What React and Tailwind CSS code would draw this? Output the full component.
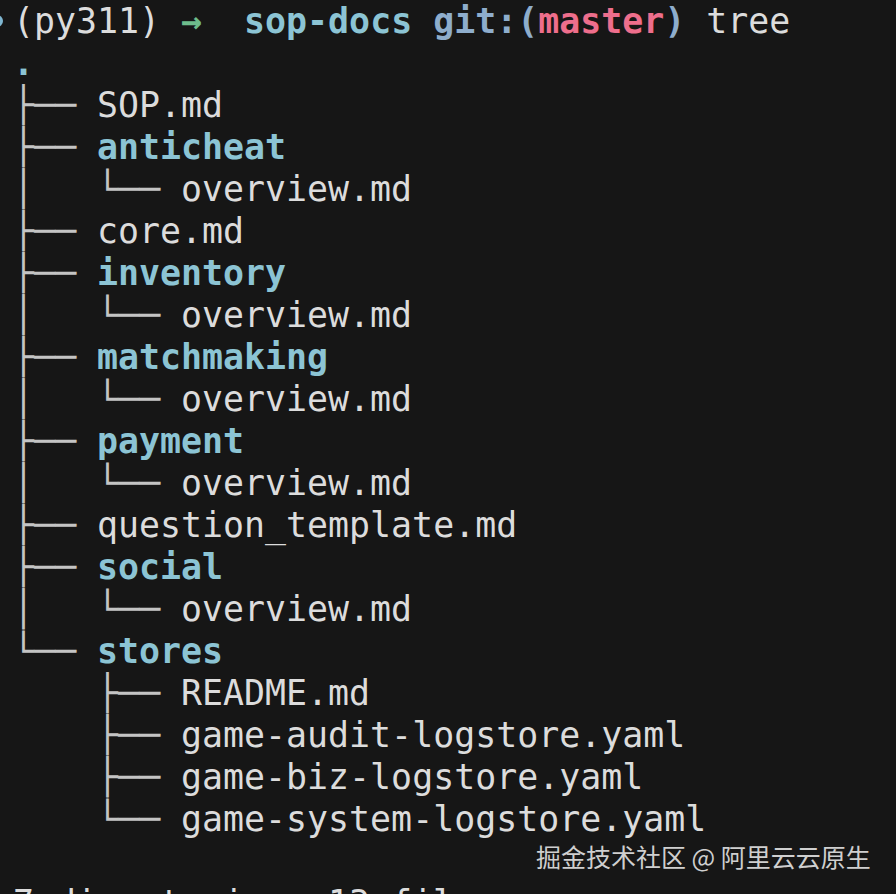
import React from "react";

const lines = [
  { tree: "", name: ".", dir: true },
  { tree: "├── ", name: "SOP.md" },
  { tree: "├── ", name: "anticheat", dir: true },
  { tree: "│   └── ", name: "overview.md" },
  { tree: "├── ", name: "core.md" },
  { tree: "├── ", name: "inventory", dir: true },
  { tree: "│   └── ", name: "overview.md" },
  { tree: "├── ", name: "matchmaking", dir: true },
  { tree: "│   └── ", name: "overview.md" },
  { tree: "├── ", name: "payment", dir: true },
  { tree: "│   └── ", name: "overview.md" },
  { tree: "├── ", name: "question_template.md" },
  { tree: "├── ", name: "social", dir: true },
  { tree: "│   └── ", name: "overview.md" },
  { tree: "└── ", name: "stores", dir: true },
  { tree: "    ├── ", name: "README.md" },
  { tree: "    ├── ", name: "game-audit-logstore.yaml" },
  { tree: "    ├── ", name: "game-biz-logstore.yaml" },
  { tree: "    └── ", name: "game-system-logstore.yaml" },
  { tree: "", name: "" },
  { tree: "", name: "7 directories, 13 files" },
];

const App = () => {
  return (
    <div className="relative h-[894px] w-[896px] overflow-hidden bg-[#161616]">
      <div
        className="pl-[13px] text-[34.9px] leading-[42px] text-[#dcdcdc] whitespace-pre"
        style={{ fontFamily: '"DejaVu Sans Mono", monospace' }}
      >
        {/* prompt */}
        <div className="relative h-[42px]">
          <span className="absolute left-[-22px] top-[15px] h-[12px] w-[12px] rounded-full bg-[#7fb6d0]" />
          <span>(py311) </span>
          <span className="font-bold text-[#6ebd8c]">→</span>
          <span>  </span>
          <span className="font-bold text-[#8cc4d4]">sop-docs</span>
          <span> </span>
          <span className="font-bold text-[#8eadcc]">git:(</span>
          <span className="font-bold text-[#ee6e8c]">master</span>
          <span className="font-bold text-[#8eadcc]">)</span>
          <span> tree</span>
        </div>
        {lines.map((l, i) => (
          <div key={i} className="h-[42px]">
            <span className="text-[#c4c4c4]">{l.tree}</span>
            <span className={l.dir ? "font-bold text-[#8cc4d4]" : ""}>{l.name}</span>
          </div>
        ))}
      </div>
      {/* watermark */}
      <div
        className="absolute left-[536px] top-[840px] text-[25px] leading-[32px] text-[#cfcfcf]"
        style={{ fontFamily: '"Noto Sans CJK SC", "Noto Sans", sans-serif' }}
      >
        掘金技术社区 @ 阿里云云原生
      </div>
    </div>
  );
};

export default App;
